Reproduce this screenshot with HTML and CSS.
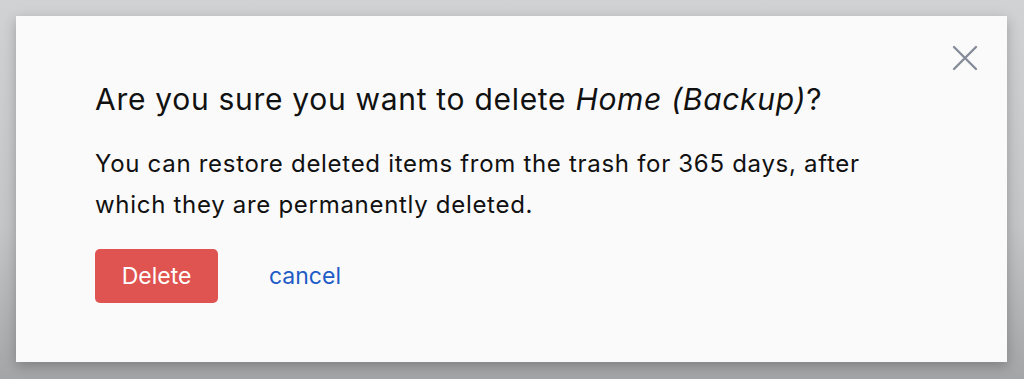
FILE: index.html
```html
<!DOCTYPE html>
<html lang="en">
<head>
    <meta charset="UTF-8">
    <meta name="viewport" content="width=device-width, initial-scale=1.0">
    <title>Delete backup</title>
    <link rel="stylesheet" href="styles.css">
</head>
<body>
    <div class="modal">
        <button class="close" aria-label="Close">
            <svg width="26" height="26" viewBox="0 0 26 26">
                <path d="M2 2 L24 24 M24 2 L2 24" stroke="#858c99" stroke-width="2.4" stroke-linecap="round" fill="none"/>
            </svg>
        </button>
        <h2 class="title">Are you sure you want to delete <em>Home (Backup)</em>?</h2>
        <p class="message">You can restore deleted items from the trash for 365 days, after which they are permanently deleted.</p>
        <div class="actions">
            <button class="delete">Delete</button>
            <a href="#" class="cancel">cancel</a>
        </div>
    </div>
</body>
</html>
```

FILE: styles.css
```css
html, body {
  height: 100%;
}

body {
  margin: 0;
  padding: 16px 17px 17px 16px;
  box-sizing: border-box;
  background: linear-gradient(to bottom, #d1d2d4 0%, #c4c5c7 60%, #a4a5a7 100%);
  font-family: Inter, "Liberation Sans", Arial, sans-serif;
  color: #111;
}

.modal {
  position: relative;
  height: 346px;
  background: #fafafa;
  box-shadow: 0 4px 12px rgba(0, 0, 0, 0.25);
  padding: 59px 79px 0 79px;
  box-sizing: border-box;
}

.close {
  position: absolute;
  top: 29px;
  right: 29px;
  background: none;
  border: none;
  padding: 0;
  cursor: pointer;
}

.title {
  margin: 0;
  font-size: 30px;
  font-weight: normal;
  letter-spacing: 0.7px;
  line-height: 48px;
}

.message {
  margin: 20px 0 0 0;
  font-size: 24px;
  letter-spacing: 0.7px;
  line-height: 41px;
  max-width: 790px;
}

.actions {
  display: flex;
  align-items: center;
  gap: 51px;
  margin-top: 24px;
}

.delete {
  width: 123px;
  height: 54px;
  border: none;
  border-radius: 5px;
  background: #df5450;
  color: #fff;
  font-family: inherit;
  font-size: 23px;
  cursor: pointer;
}

.cancel {
  color: #1e5bc6;
  font-size: 23px;
  text-decoration: none;
}
```
